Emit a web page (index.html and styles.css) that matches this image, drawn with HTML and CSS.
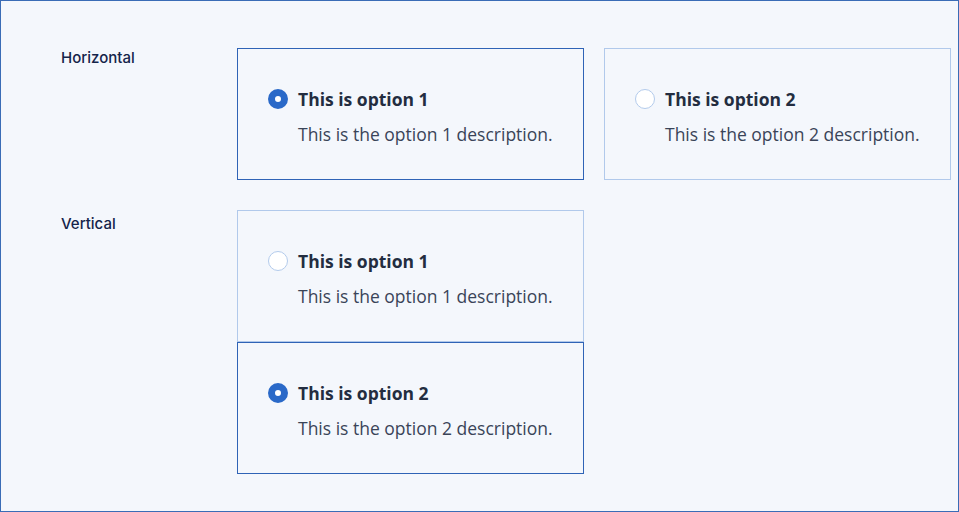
FILE: index.html
```html
<!DOCTYPE html>
<html>
<head>
<meta charset="utf-8">
<link rel="stylesheet" href="styles.css">
</head>
<body>
<div class="frame">
  <div class="row">
    <div class="label label-h">Horizontal</div>
    <div class="group horizontal">
      <div class="card selected">
        <span class="radio"></span>
        <div class="text">
          <div class="title">This is option 1</div>
          <div class="desc">This is the option 1 description.</div>
        </div>
      </div>
      <div class="card">
        <span class="radio"></span>
        <div class="text">
          <div class="title">This is option 2</div>
          <div class="desc">This is the option 2 description.</div>
        </div>
      </div>
    </div>
  </div>
  <div class="row">
    <div class="label label-v">Vertical</div>
    <div class="group vertical">
      <div class="card">
        <span class="radio"></span>
        <div class="text">
          <div class="title">This is option 1</div>
          <div class="desc">This is the option 1 description.</div>
        </div>
      </div>
      <div class="card selected">
        <span class="radio"></span>
        <div class="text">
          <div class="title">This is option 2</div>
          <div class="desc">This is the option 2 description.</div>
        </div>
      </div>
    </div>
  </div>
</div>
</body>
</html>
```

FILE: styles.css
```css
html, body {
  margin: 0;
  padding: 0;
}
body {
  background: #f4f7fc;
}
.frame {
  box-sizing: border-box;
  width: 959px;
  height: 512px;
  border: 1px solid #3a6cb6;
  background: #f4f7fc;
  padding: 47px 0 0 60px;
  display: flex;
  flex-direction: column;
  gap: 30px;
}
.row {
  display: flex;
}
.label {
  width: 176px;
  font-family: Inter, "Noto Sans", sans-serif;
  font-size: 15px;
  font-weight: 500;
  color: #14244a;
  line-height: 20px;
}
.label-h {
  padding-top: 0;
}
.label-v {
  padding-top: 4px;
}
.group {
  display: flex;
}
.group.horizontal {
  gap: 20px;
}
.group.vertical {
  flex-direction: column;
}
.card {
  box-sizing: border-box;
  width: 347px;
  height: 132px;
  border: 1px solid #b1c9eb;
  padding: 38px 0 0 30px;
  display: flex;
  gap: 10px;
  font-family: "Open Sans", "Noto Sans", sans-serif;
}
.card.selected {
  border-color: #2f63b6;
}
.radio {
  box-sizing: border-box;
  width: 20px;
  height: 20px;
  border-radius: 50%;
  background: #ffffff;
  border: 1px solid #b3cbec;
  margin-top: 2px;
  flex: none;
}
.card.selected .radio {
  border: 7px solid #2a69c8;
  background: #ffffff;
}
.text {
  display: flex;
  flex-direction: column;
  gap: 11px;
}
.title {
  font-size: 17.5px;
  font-weight: 700;
  line-height: 24px;
  color: #232d40;
}
.desc {
  font-size: 17.5px;
  font-weight: 400;
  line-height: 24px;
  color: #3a4458;
}
```
